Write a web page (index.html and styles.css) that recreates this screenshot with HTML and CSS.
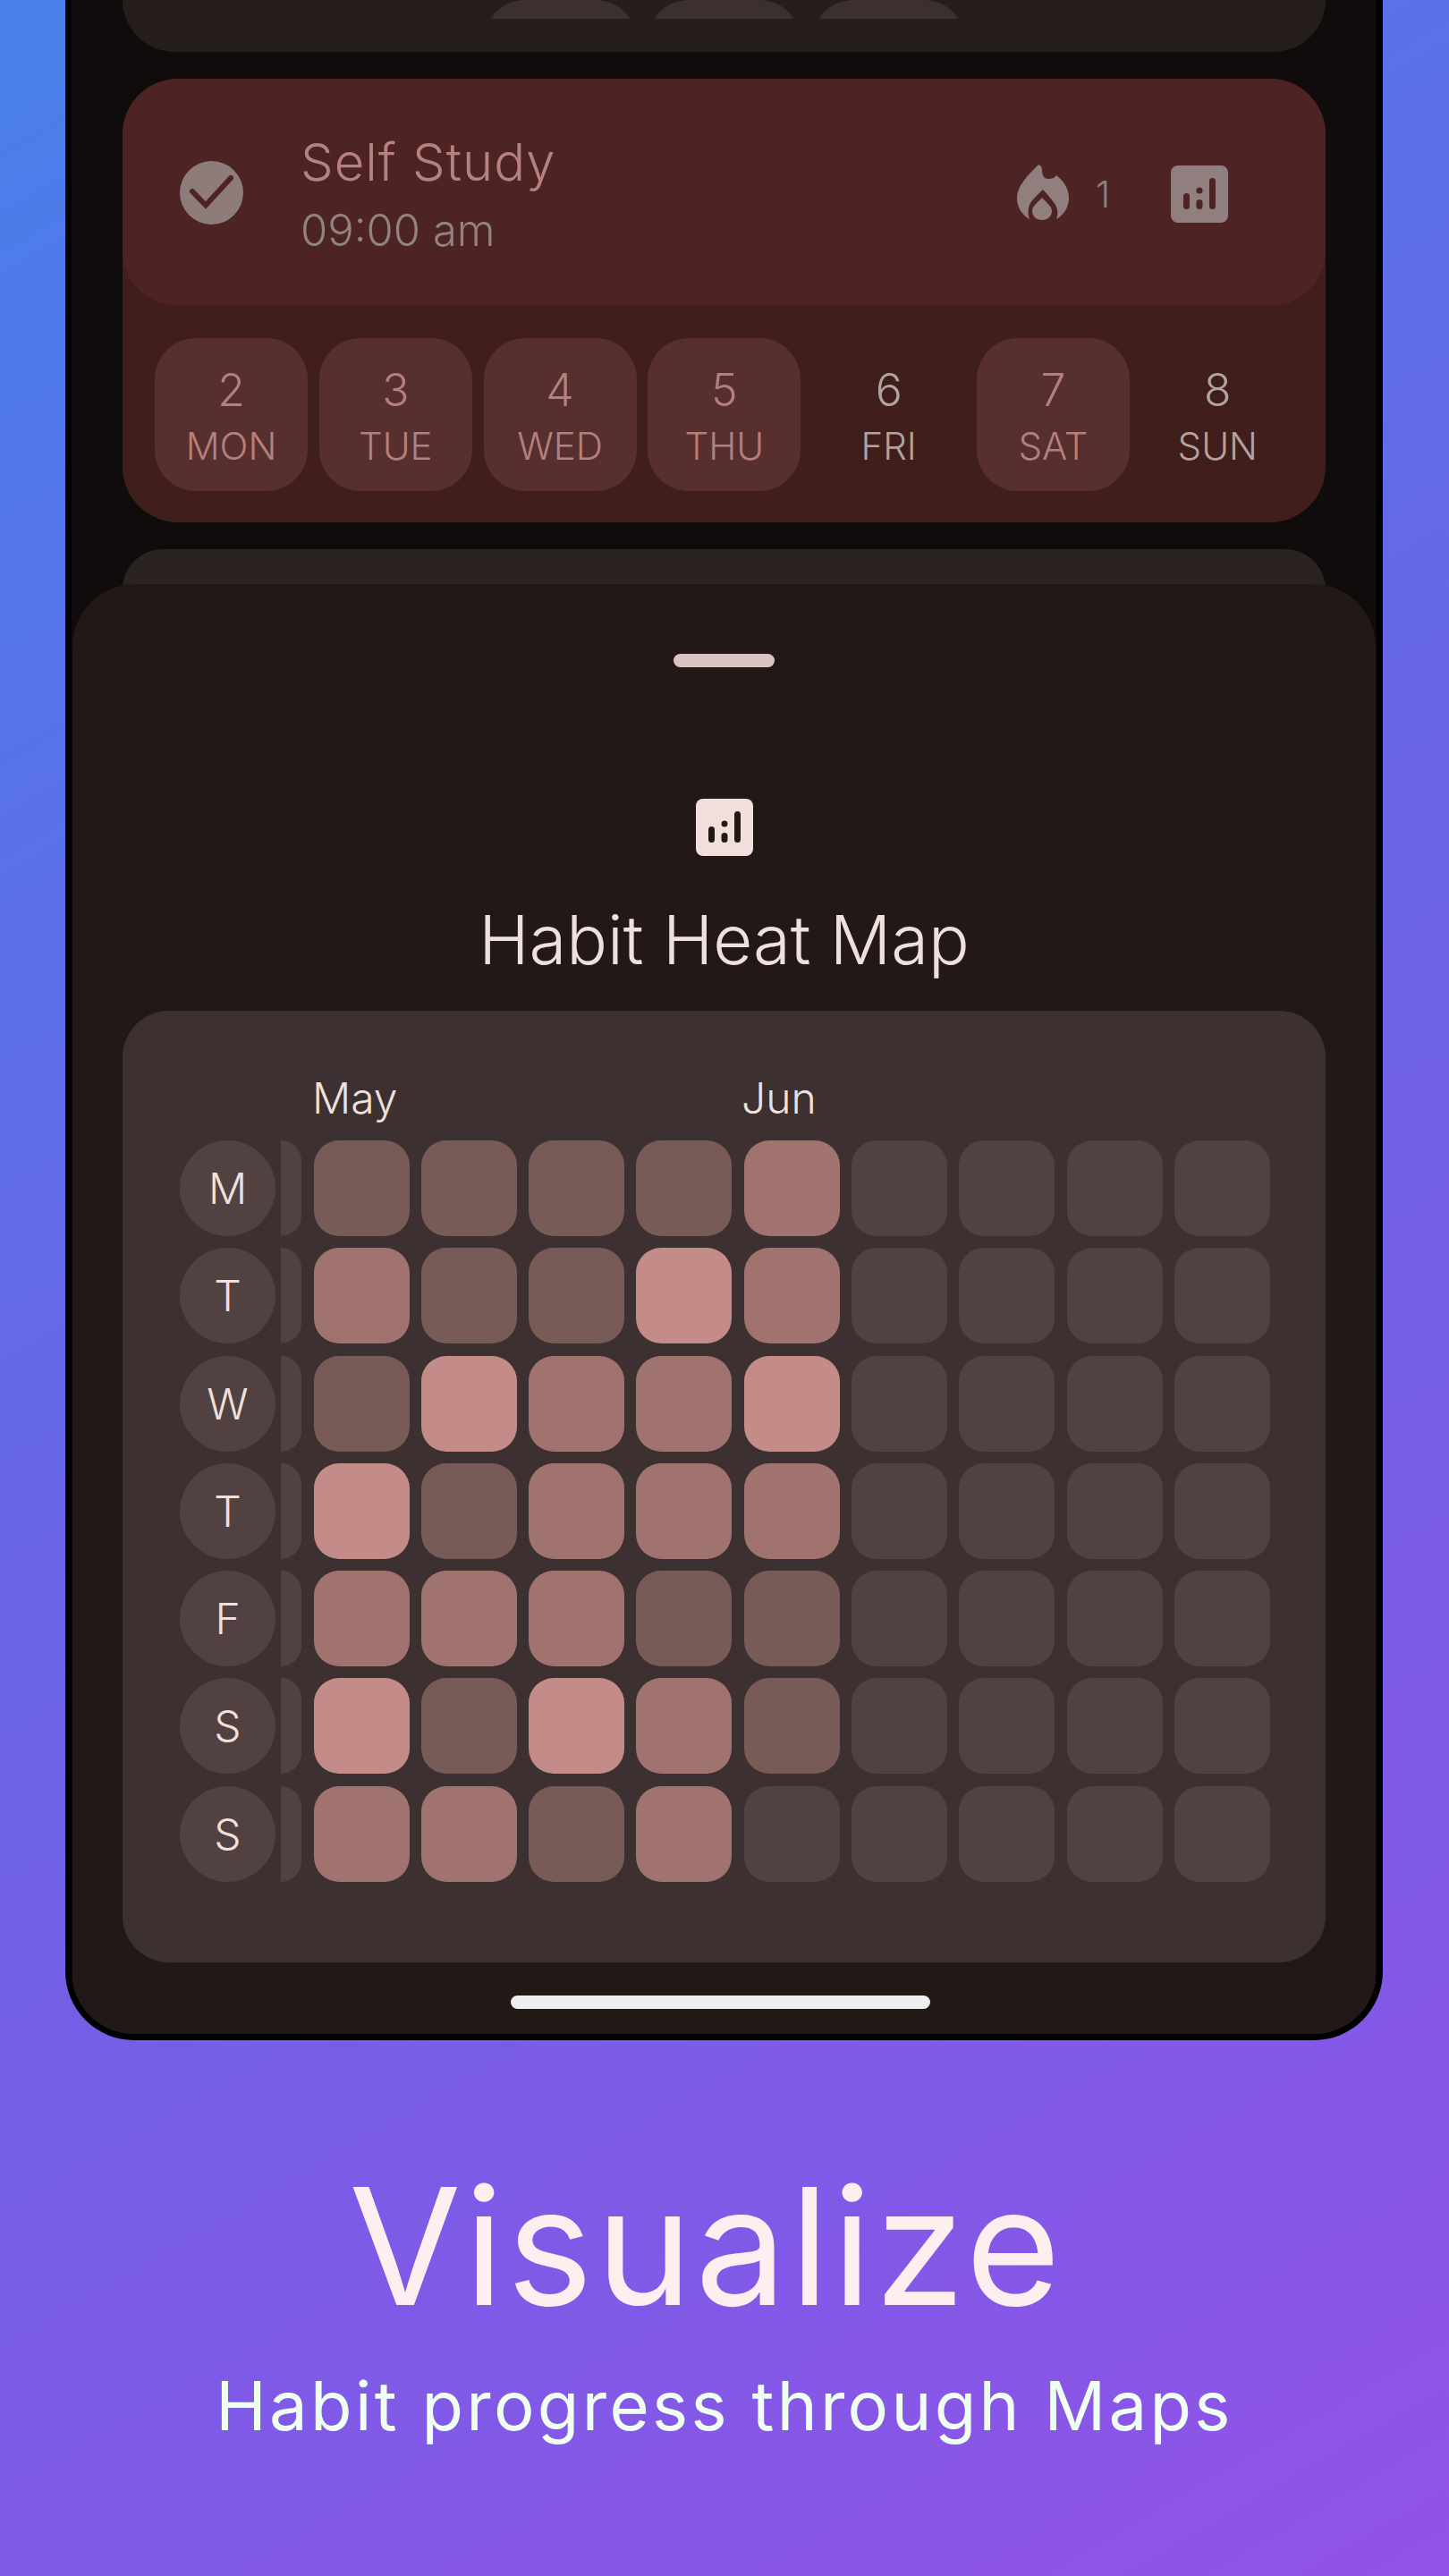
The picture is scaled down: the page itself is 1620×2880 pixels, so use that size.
FILE: index.html
```html
<!DOCTYPE html>
<html lang="en">
<head>
<meta charset="utf-8">
<title>Visualize</title>
<link rel="stylesheet" href="styles.css">
</head>
<body>
<main class="page">
  <section class="phone">
    <div class="list">
      <div class="habit habit-prev">
        <div class="days days-prev">
          <span class="chip-end"></span><span class="chip-end"></span><span class="chip-end"></span>
        </div>
      </div>
      <div class="habit habit-done">
        <div class="habit-head">
          <svg class="check" viewBox="0 0 71 71"><circle cx="35.5" cy="35.5" r="35.5" fill="#8e7c7b"/><path d="M14 34l15 15.500L57 19" fill="none" stroke="#4e2323" stroke-width="6" stroke-linecap="round"/></svg>
          <div class="habit-text">
            <div class="habit-name">Self Study</div>
            <div class="habit-time">09:00 am</div>
          </div>
          <svg class="flame" viewBox="0 0 58 62"><path fill="#917f7f" d="M24 0C27 1 28 3 28 6C28 11 30 16 35 16C39 16 42 15 44 12C52 18 58 27 58 37C58 47 53 56 44 61C46 57 46 50 43 45C39 39 34 33 29 28C24 33 18 38 15 43C12 48 12 56 14 61C5 56 0 47 0 37C0 24 12 12 24 0ZM28 37C32 42 39 46 39 52C39 58 34 62 28 62C22 62 17 58 17 52C17 46 24 42 28 37Z"/></svg>
          <span class="streak">1</span>
          <svg class="chart" viewBox="0 0 64 64"><rect width="64" height="64" rx="8" fill="#917f7f"/><g fill="#4e2323"><rect x="14" y="31" width="7" height="18" rx="3.500"/><circle cx="32" cy="28" r="3.500"/><rect x="28.500" y="38" width="7" height="11" rx="3.500"/><rect x="43" y="14" width="7" height="35" rx="3.500"/></g></svg>
        </div>
        <div class="days">
          <div class="day chip"><b>2</b><span>MON</span></div>
          <div class="day chip"><b>3</b><span>TUE</span></div>
          <div class="day chip"><b>4</b><span>WED</span></div>
          <div class="day chip"><b>5</b><span>THU</span></div>
          <div class="day"><b>6</b><span>FRI</span></div>
          <div class="day chip"><b>7</b><span>SAT</span></div>
          <div class="day"><b>8</b><span>SUN</span></div>
        </div>
      </div>
      <div class="habit habit-next"></div>
    </div>
    <div class="sheet">
      <div class="handle"></div>
      <svg class="sheet-icon" viewBox="0 0 64 64"><rect width="64" height="64" rx="8" fill="#f0dfdd"/><g fill="#221917"><rect x="14" y="31" width="7" height="18" rx="3.500"/><circle cx="32" cy="28" r="3.500"/><rect x="28.500" y="38" width="7" height="11" rx="3.500"/><rect x="43" y="14" width="7" height="35" rx="3.500"/></g></svg>
      <h2 class="sheet-title">Habit Heat Map</h2>
      <div class="panel">
        <div class="heat">
          <div class="months"><span class="m-may">May</span><span class="m-jun">Jun</span></div>
          <div class="heat-grid">
            <div class="wd">M</div><div class="cut"></div><i class="l1"></i><i class="l1"></i><i class="l1"></i><i class="l1"></i><i class="l2"></i><i></i><i></i><i></i><i></i>
            <div class="wd">T</div><div class="cut"></div><i class="l2"></i><i class="l1"></i><i class="l1"></i><i class="l3"></i><i class="l2"></i><i></i><i></i><i></i><i></i>
            <div class="wd">W</div><div class="cut"></div><i class="l1"></i><i class="l3"></i><i class="l2"></i><i class="l2"></i><i class="l3"></i><i></i><i></i><i></i><i></i>
            <div class="wd">T</div><div class="cut"></div><i class="l3"></i><i class="l1"></i><i class="l2"></i><i class="l2"></i><i class="l2"></i><i></i><i></i><i></i><i></i>
            <div class="wd">F</div><div class="cut"></div><i class="l2"></i><i class="l2"></i><i class="l2"></i><i class="l1"></i><i class="l1"></i><i></i><i></i><i></i><i></i>
            <div class="wd">S</div><div class="cut"></div><i class="l3"></i><i class="l1"></i><i class="l3"></i><i class="l2"></i><i class="l1"></i><i></i><i></i><i></i><i></i>
            <div class="wd">S</div><div class="cut"></div><i class="l2"></i><i class="l2"></i><i class="l1"></i><i class="l2"></i><i></i><i></i><i></i><i></i><i></i>
          </div>
        </div>
      </div>
      <div class="homebar"></div>
    </div>
  </section>
  <h1 class="headline">Visualize</h1>
  <p class="sub">Habit progress through Maps</p>
</main>
</body>
</html>
```
FILE: styles.css
```css
* { box-sizing: border-box; }
html, body { margin: 0; padding: 0; }
body { width: 1620px; height: 2880px; overflow: hidden; font-family: "Inter", "Liberation Sans", sans-serif; }
.page {
  width: 1620px; height: 2880px; display: flex; flex-direction: column; align-items: center;
  background: linear-gradient(150deg, #4880ea 0%, #6c63e6 50%, #9152e8 100%);
}
.phone {
  position: relative; width: 1473px; height: 2281px; flex: none; margin-left: -1px;
  border: 7px solid #000; border-top: 0; border-radius: 0 0 77px 77px; background: #100c0c; overflow: hidden;
}
.list { display: flex; flex-direction: column; gap: 30px; padding: 0 57px; }
.habit { border-radius: 62px; }
.habit-prev { height: 58px; background: #261e1c; border-radius: 0 0 62px 62px; }
.days-prev { height: 21px; overflow: hidden; align-items: end; }
.chip-end { display: block; height: 171px; background: #3c302f; border-radius: 46px; }
.chip-end:nth-child(1) { grid-column: 3; }
.habit-done { height: 496px; background: #401e1c; }
.habit-head {
  height: 254px; background: #4e2323; border-radius: 62px; display: flex; align-items: center;
  padding: 0 109px 0 64px;
}
.check { width: 71px; height: 71px; flex: none; }
.habit-text { margin-left: 64px; flex: 1; padding-top: 5px; }
.habit-name { font-size: 58px; line-height: 68px; color: #b5827d; font-weight: 300; letter-spacing: 1px; }
.habit-time { font-size: 49px; line-height: 62px; margin-top: 12px; color: #918381; font-weight: 300; }
.flame { width: 58px; height: 62px; flex: none; }
.streak { width: 114px; padding-left: 30px; margin-top: 4px; font-size: 41px; font-weight: 300; color: #917f7f; }
.chart { width: 64px; height: 64px; flex: none; margin-top: 4px; }
.days { display: grid; grid-template-columns: repeat(7, 171px); column-gap: 12.800px; padding: 0 36px; }
.habit-done .days { margin-top: 36px; }
.day { height: 171px; border-radius: 46px; display: flex; flex-direction: column; align-items: center; color: #b0a4a2; font-weight: 300; }
.day b { font-weight: 300; font-size: 50px; line-height: 60px; margin-top: 28px; }
.day span { font-size: 42px; line-height: 52px; margin-top: 7px; }
.chip { background: #572f2f; color: #b5807b; }
.habit-next { height: 90px; background: #2b2321; }
.sheet {
  position: absolute; left: 1px; right: 1px; top: 653px; bottom: 0; background: #221917;
  border-radius: 70px 70px 0 0; display: flex; flex-direction: column; align-items: center;
}
.handle { width: 113px; height: 15px; border-radius: 8px; background: #dcc4c2; margin-top: 78px; }
.sheet-icon { width: 64px; height: 64px; margin-top: 147px; flex: none; }
.sheet-title { margin: 43px 0 0; font-size: 76px; line-height: 100px; font-weight: 300; color: #f0e0dd; }
.panel { width: 1345px; height: 1064px; margin-top: 30px; background: #3d3031; border-radius: 52px; padding: 68px 0 0 64px; flex: none; }
.months { height: 77px; position: relative; color: #f0e0dd; font-size: 48px; font-weight: 300; line-height: 60px; }
.m-may { position: absolute; left: 148px; }
.m-jun { position: absolute; left: 628px; }
.heat-grid { display: grid; grid-template-columns: 107px 16px repeat(9, 107px); grid-auto-rows: 107px; gap: 13.300px; }
.heat-grid i { display: block; background: #514241; border-radius: 28px; }
.heat-grid i.l1 { background: #785a57; }
.heat-grid i.l2 { background: #a1736e; }
.heat-grid i.l3 { background: #c48c88; }
.wd { border-radius: 50%; background: #514241; color: #f0e0dd; font-size: 48px; font-weight: 300; display: flex; align-items: center; justify-content: center; }
.cut { background: #514241; border-radius: 0 28px 28px 0; margin-left: -7px; }
.homebar { position: absolute; left: 490px; top: 1578px; width: 469px; height: 15px; border-radius: 8px; background: #efefef; }
.headline { margin: 130px 0 0 -41px; font-size: 182px; line-height: 200px; font-weight: 400; letter-spacing: 3.500px; color: #fdeef0; }
.sub { margin: 28px 0 0; font-size: 76px; line-height: 100px; font-weight: 400; letter-spacing: 3.300px; color: #f0fff4; }
```
